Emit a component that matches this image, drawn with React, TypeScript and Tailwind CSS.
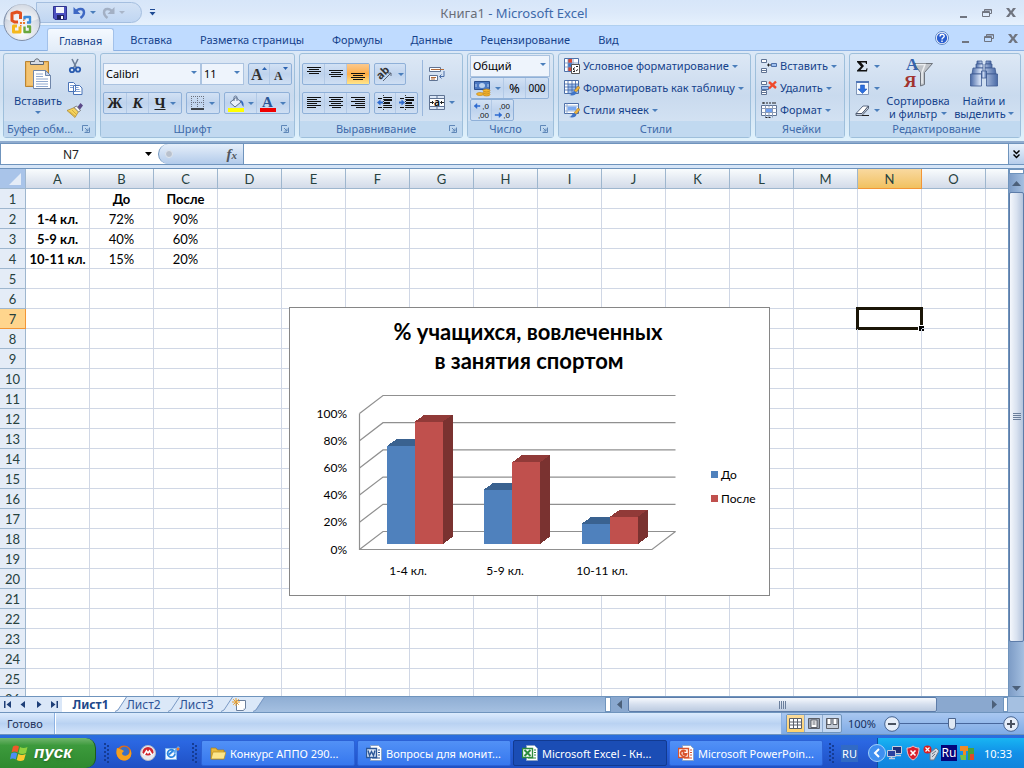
import type { ReactNode } from "react";
import clsx from "clsx";

const COLUMNS = "ABCDEFGHIJKLMNO".split("");
const ROW_COUNT = 26;

const cells: Record<string, string> = {
  B1: "До", C1: "После",
  A2: "1-4 кл.", B2: "72%", C2: "90%",
  A3: "5-9 кл.", B3: "40%", C3: "60%",
  A4: "10-11 кл.", B4: "15%", C4: "20%",
};

const chartData = [
  { label: "1-4 кл.", before: 72, after: 90 },
  { label: "5-9 кл.", before: 40, after: 60 },
  { label: "10-11 кл.", before: 15, after: 20 },
];

const tabs = ["Главная", "Вставка", "Разметка страницы", "Формулы", "Данные", "Рецензирование", "Вид"];

export default function App() {
  return (
    <div className="h-screen w-full flex flex-col overflow-hidden bg-[#bfdbff] text-[#15428b] font-['Noto_Sans','Open_Sans',sans-serif] text-[11px] leading-[13px]">
      <header className="relative shrink-0">
        <TitleBar />
        <TabBar />
        <button aria-label="Office" className="absolute left-0.5 top-0.5">
          <OfficeLogo />
        </button>
      </header>
      <Ribbon />
      <FormulaBar />
      <div className="flex flex-1 min-h-0 border-t border-[#6f94bd]">
        <Sheet />
        <VerticalScroll />
      </div>
      <SheetTabs />
      <StatusBar />
      <Taskbar />
    </div>
  );
}

/* ---------- title and tabs ---------- */

function TitleBar() {
  return (
    <div className="h-[26px] flex items-center bg-linear-to-b from-[#d7e6f9] via-[#dce9fa] to-[#e6f1fd] border-b border-[#b0d0f0]">
      <div className="w-[106px] ml-9 h-[21px] flex items-center gap-1.5 pl-4 rounded-r-full border border-[#a4bedf] bg-linear-to-b from-[#d3e2f5] to-[#c0d6f2]">
        <button aria-label="Сохранить"><SaveIcon /></button>
        <button aria-label="Отменить" className="flex items-center gap-1 text-[#3e68c4]"><UndoIcon /><Caret /></button>
        <button aria-label="Вернуть" className="flex items-center gap-1 text-[#a3b0c4]"><UndoIcon flip /><Caret muted /></button>
      </div>
      <button aria-label="Настройка панели" className="ml-1.5">
        <svg width="9" height="9" viewBox="0 0 9 9" fill="#1e4a94"><path d="M2 1h5v1H2zM1.500 4h6L4.500 7.500z" /></svg>
      </button>
      <h1 className="flex-1 pr-[88px] text-center text-[13px] leading-4 text-[#3e6aaa]">
        <span className="text-[#696e78]">Книга1</span> - Microsoft Excel
      </h1>
      <WindowButtons className="mr-2" />
    </div>
  );
}

function TabBar() {
  return (
    <nav className="h-[25px] flex items-end gap-1 pl-[47px] border-b border-[#8db2e3] bg-[#bfdbff]">
      {tabs.map((tab, i) => (
        <button
          key={tab}
          className={clsx(
            "h-[23px] whitespace-nowrap",
            i === 0
              ? "px-[11px] -mb-px rounded-t-[3px] border border-b-0 border-[#a2c1ea] bg-linear-to-b from-[#f4f9ff] to-[#e2ecf8]"
              : "px-3 pt-0.5"
          )}
        >
          {tab}
        </button>
      ))}
      <div className="ml-auto mr-1.5 h-full flex items-center gap-3">
        <button aria-label="Справка">
          <svg width="14" height="14" viewBox="0 0 14 14">
            <circle cx="7" cy="7" r="6.500" fill="#fff" stroke="#5b84c4" />
            <circle cx="7" cy="7" r="5.200" fill="#2b5fd0" />
            <path d="M5 5.500c0-3 4.200-2.800 4.200-.3C9.200 6.800 7 6.700 7 8.500M7 9.600v1.400" stroke="#fff" strokeWidth="1.400" fill="none" />
          </svg>
        </button>
        <WindowButtons />
      </div>
    </nav>
  );
}

function WindowButtons({ className }: { className?: string }) {
  return (
    <div className={clsx("flex items-center gap-3.5 text-[#707580]", className)}>
      <button aria-label="Свернуть">
        <svg width="9" height="10" viewBox="0 0 9 10"><path d="M1 8h7v2H1z" fill="currentColor" /></svg>
      </button>
      <button aria-label="Восстановить">
        <svg width="10" height="8" viewBox="0 0 10 8" fill="none" stroke="currentColor">
          <path d="M2.500 2V.5h7v4H7.500M.5 2.500h7v5h-7zM1 3.500h6.500M2.500 1h7" />
        </svg>
      </button>
      <button aria-label="Закрыть">
        <svg width="10" height="9" viewBox="0 0 10 9"><path d="M0 0h3l2 3 2-3h3L6.600 4.500 10 9H7L5 6 3 9H0l3.400-4.500z" fill="currentColor" /></svg>
      </button>
    </div>
  );
}

/* ---------- ribbon ---------- */

function Ribbon() {
  return (
    <div className="h-[92px] shrink-0 flex gap-1 px-[3px] pt-0.5 pb-[3px] overflow-hidden border-b-2 border-[#8fabce] bg-linear-to-b from-[#dbe8f7] via-[#cfdff1] to-[#e0f2fc]">
      <Group title="Буфер обм..." className="w-[93px]" launcher>
        <div className="flex h-full">
          <button className="w-[62px] flex flex-col items-center pt-1 pl-1.5">
            <PasteIcon />
            <span className="mt-1">Вставить</span>
            <span className="mt-1"><Caret /></span>
          </button>
          <div className="flex-1 flex flex-col items-center gap-1.5 pt-1 pr-3">
            <button aria-label="Вырезать"><CutIcon /></button>
            <button aria-label="Копировать"><CopyIcon /></button>
            <button aria-label="Формат по образцу"><BrushIcon /></button>
          </div>
        </div>
      </Group>

      <Group title="Шрифт" className="w-[195px]" launcher>
        <div className="flex flex-col gap-[7px] pl-0.5 pt-[9px]">
          <div className="flex gap-1">
            <div className="flex">
              <Select label="Шрифт" value="Calibri" className="w-[98px]" />
              <Select label="Размер" value="11" className="w-[43px]" />
            </div>
            <ButtonStrip>
              <StripButton label="Увеличить размер" className="w-[21px]">
                <svg className="overflow-visible" width="17" height="16" viewBox="0 0 17 16">
                  <text x="0" y="14" fontSize="16" className="font-['Liberation_Serif',serif] font-bold" fill="#333">A</text>
                  <path d="M11 4h5l-2.500-3z" fill="#2a62b0" />
                </svg>
              </StripButton>
              <StripButton label="Уменьшить размер" className="w-[21px]">
                <svg className="overflow-visible" width="17" height="16" viewBox="0 0 17 16">
                  <text x="2" y="14" fontSize="12" className="font-['Liberation_Serif',serif] font-bold" fill="#333">A</text>
                  <path d="M11 1h5l-2.500 3z" fill="#2a62b0" />
                </svg>
              </StripButton>
            </ButtonStrip>
          </div>
          <div className="flex gap-1 font-['Liberation_Serif',serif] font-bold text-[15px] text-[#222]">
            <ButtonStrip>
              <StripButton label="Полужирный" className="w-[23px]">Ж</StripButton>
              <StripButton label="Курсив" className="w-[22px] italic">К</StripButton>
              <StripButton label="Подчеркнутый" className="w-[32px]"><span className="underline">Ч</span><Caret /></StripButton>
            </ButtonStrip>
            <ButtonStrip>
              <StripButton label="Границы" className="w-[32px]"><BorderIcon /><Caret /></StripButton>
            </ButtonStrip>
            <ButtonStrip>
              <StripButton label="Цвет заливки" className="w-[32px]"><FillIcon /><Caret /></StripButton>
              <StripButton label="Цвет текста" className="w-[32px]">
                <svg className="overflow-visible" width="16" height="17" viewBox="0 0 16 17">
                  <text x="2" y="12" fontSize="15" className="font-['Liberation_Serif',serif] font-bold" fill="#2b5696">A</text>
                  <path d="M0 13h16v4H0z" fill="#f00000" />
                </svg>
                <Caret />
              </StripButton>
            </ButtonStrip>
          </div>
        </div>
      </Group>

      <Group title="Выравнивание" className="w-[164px]" launcher>
        <div className="flex">
          <div className="flex flex-col gap-[7px] pl-0.5 pt-[9px]">
            <div className="flex gap-1">
              <ButtonStrip>
                <StripButton label="По верхнему краю" className="w-[22px]"><LinesIcon rows={[14, 10, 14, 10]} top={1} /></StripButton>
                <StripButton label="По середине" className="w-[22px]"><LinesIcon rows={[14, 10, 14, 10]} top={4} /></StripButton>
                <StripButton label="По нижнему краю" className="w-[22px]" active><LinesIcon rows={[14, 10, 14, 10]} top={7} /></StripButton>
              </ButtonStrip>
              <ButtonStrip>
                <StripButton label="Ориентация" className="w-[30px]"><OrientationIcon /><Caret /></StripButton>
              </ButtonStrip>
            </div>
            <div className="flex gap-1">
              <ButtonStrip>
                <StripButton label="По левому краю" className="w-[22px]"><LinesIcon rows={[14, 10, 14, 10, 14, 9]} top={2} align="left" /></StripButton>
                <StripButton label="По центру" className="w-[22px]"><LinesIcon rows={[14, 10, 14, 10, 14, 9]} top={2} /></StripButton>
                <StripButton label="По правому краю" className="w-[22px]"><LinesIcon rows={[14, 10, 14, 10, 14, 9]} top={2} align="right" /></StripButton>
              </ButtonStrip>
              <ButtonStrip>
                <StripButton label="Уменьшить отступ" className="w-[21px]"><IndentIcon left /></StripButton>
                <StripButton label="Увеличить отступ" className="w-[21px]"><IndentIcon /></StripButton>
              </ButtonStrip>
            </div>
          </div>
          <div className="mt-1.5 ml-1 h-[56px] border-l border-[#9ab7dc]" />
          <div className="flex flex-col gap-[13px] pt-3 pl-1.5">
            <button aria-label="Перенос текста"><WrapIcon /></button>
            <button aria-label="Объединить" className="flex items-center gap-1"><MergeIcon /><Caret /></button>
          </div>
        </div>
      </Group>

      <Group title="Число" className="w-[87px]" launcher>
        <div className="flex flex-col items-start pl-0.5 pt-px">
          <Select label="Формат числа" value="Общий" className="w-20" />
          <ButtonStrip>
            <StripButton label="Денежный формат" className="w-[33px]"><CoinsIcon /><Caret /></StripButton>
            <StripButton label="Процентный формат" className="w-[22px] text-[13px] text-black">%</StripButton>
            <StripButton label="Формат с разделителями" className="w-[22px] text-[10px] text-black">000</StripButton>
          </ButtonStrip>
          <ButtonStrip>
            <StripButton label="Увеличить разрядность" className="w-[21px]"><DecimalIcon left /></StripButton>
            <StripButton label="Уменьшить разрядность" className="w-[21px]"><DecimalIcon /></StripButton>
          </ButtonStrip>
        </div>
      </Group>

      <Group title="Стили" className="w-[193px]">
        <div className="flex flex-col items-start gap-1.5 pl-[5px] pt-1">
          <IconRow icon={<GridIcon kind="cond" />} text="Условное форматирование" />
          <IconRow icon={<GridIcon kind="table" />} text="Форматировать как таблицу" />
          <IconRow icon={<GridIcon kind="cell" />} text="Стили ячеек" />
        </div>
      </Group>

      <Group title="Ячейки" className="w-[90px]">
        <div className="flex flex-col items-start gap-1.5 pl-[5px] pt-1">
          <IconRow icon={<CellsIcon kind="insert" />} text="Вставить" />
          <IconRow icon={<CellsIcon kind="delete" />} text="Удалить" />
          <IconRow icon={<CellsIcon kind="format" />} text="Формат" />
        </div>
      </Group>

      <Group title="Редактирование" className="flex-1 min-w-[171px]">
        <div className="flex h-full">
          <div className="flex flex-col items-start gap-1.5 pl-[5px] pt-1">
            <button aria-label="Сумма" className="flex items-center gap-1">
              <svg width="15" height="16" viewBox="0 0 15 16"><path d="M2 3h10v3h-1L10.500 4.500H6L9 8l-3.500 4H11l.6-1.800h.9L12 13.500H2v-1L6 8.500 2 4z" fill="#111" /></svg>
              <Caret />
            </button>
            <button aria-label="Заполнить" className="flex items-center gap-1">
              <svg width="15" height="16" viewBox="0 0 15 16">
                <path d="M1.500 1.500h12v13h-12z" fill="#f3f8ff" stroke="#8196b8" /><path d="M1 1h13v2H1z" fill="#5076b8" />
                <path d="M5.500 5h4v4H12l-4.500 4.500L3 9h2.500z" fill="#2b6ee0" stroke="#174aa8" strokeWidth=".5" />
              </svg>
              <Caret />
            </button>
            <button aria-label="Очистить" className="flex items-center gap-1">
              <svg width="15" height="16" viewBox="0 0 15 16">
                <path d="M1 11.500 8 4h5.500L7 11.500z" fill="#fff" stroke="#5c6b84" /><path d="M1 11.500v2h6l6.500-7V4L7 11.500z" fill="#c5cedd" stroke="#3b475c" strokeWidth=".8" />
                <path d="M7 13.500h7" stroke="#222" />
              </svg>
              <Caret />
            </button>
          </div>
          <button className="w-[70px] ml-[3px] flex flex-col items-center pt-1">
            <SortIcon />
            <span className="mt-1 whitespace-nowrap">Сортировка</span>
            <span className="flex items-center gap-1 whitespace-nowrap">и фильтр <Caret /></span>
          </button>
          <button className="w-[62px] flex flex-col items-center pt-1">
            <BinocularsIcon />
            <span className="mt-1 whitespace-nowrap">Найти и</span>
            <span className="flex items-center gap-0.5 whitespace-nowrap">выделить <Caret /></span>
          </button>
        </div>
      </Group>
    </div>
  );
}

function Group({ title, className, launcher, children }: { title: string; className?: string; launcher?: boolean; children: ReactNode }) {
  return (
    <section className={clsx("shrink-0 flex flex-col rounded-[3px] border border-[#9ebfdb] bg-linear-to-b from-[#dde8f5] via-[#c9daee] to-[#d8e6f5]", className)}>
      <div className="flex-1 min-h-0">{children}</div>
      <div className="h-4 shrink-0 flex items-center bg-[#c1d9f0] text-[#3e6aaa] pl-[3px]">
        <h2 className={clsx("flex-1 leading-4 whitespace-nowrap", title.endsWith("...") ? "text-left" : "text-center")}>{title}</h2>
        {launcher && (
          <button aria-label={title + ": параметры"} className="mr-[5px]">
            <svg width="8" height="8" viewBox="0 0 8 8" fill="none" stroke="#5f87b8">
              <path d="M.5 6V.5H6M2.500 7.500h5v-5M3 3l3 3M3.500 6h2.500V3.500" />
            </svg>
          </button>
        )}
      </div>
    </section>
  );
}

function Select({ label, value, className }: { label: string; value: string; className: string }) {
  return (
    <div className={clsx("relative h-[22px]", className)}>
      <select aria-label={label} defaultValue={value} className="w-full h-full appearance-none border border-[#abc3e0] bg-[#eef4fc] pl-0.5 leading-4 text-black">
        <option>{value}</option>
      </select>
      <span className="pointer-events-none absolute right-1 top-2"><Caret /></span>
    </div>
  );
}

function ButtonStrip({ children }: { children: ReactNode }) {
  return (
    <div className="h-[22px] flex rounded-[2px] border border-[#8fb0d8] bg-linear-to-b from-[#d2e1f4] via-[#bfd3ed] to-[#cfdff3] divide-x divide-[#b2c9e6]">
      {children}
    </div>
  );
}

function StripButton({ label, className, active, children }: { label: string; className?: string; active?: boolean; children: ReactNode }) {
  return (
    <button
      aria-label={label}
      className={clsx("flex items-center justify-center gap-1", className, active && "bg-linear-to-b from-[#fbc98d] via-[#ffad43] to-[#ffe68a]")}
    >
      {children}
    </button>
  );
}

function IconRow({ icon, text }: { icon: ReactNode; text: string }) {
  return (
    <button className="h-4 flex items-center gap-[3px] whitespace-nowrap">
      {icon}
      <span className="leading-4">{text}</span>
      <Caret />
    </button>
  );
}

function Caret({ muted }: { muted?: boolean }) {
  return (
    <svg className="shrink-0" width="6" height="3" viewBox="0 0 6 3"><path d="M0 0h6L3 3z" fill={muted ? "#a9b6c9" : "#4a7ebb"} /></svg>
  );
}

/* ---------- formula bar ---------- */

function FormulaBar() {
  return (
    <div className="shrink-0 pb-[3px] bg-[#d6e5f7]">
      <div className="h-[22px] flex border-y border-[#6f94bd] bg-white">
        <div className="w-[158px] flex items-center border-l border-[#6f94bd]">
          <input aria-label="Имя" defaultValue="N7" className="flex-1 min-w-0 pr-1 text-center text-[12px] text-[#222] outline-none" />
          <button aria-label="Список имен" className="mr-1.5">
            <svg width="7" height="4" viewBox="0 0 7 4"><path d="M0 0h7L3.500 4z" fill="#000" /></svg>
          </button>
        </div>
        <div className="w-[86px] flex items-center justify-between rounded-l-full border border-y-0 border-[#6f94bd] bg-linear-to-b from-[#e6effa] to-[#b3cbea] pl-1.5 pr-1.5">
          <span className="size-2 rounded-full bg-[#b9c1cd] border border-[#dfe6ef]" />
          <button aria-label="Вставить функцию" className="font-['Liberation_Serif',serif] italic font-bold text-[15px] leading-4 text-[#51565e]">
            f<span className="text-[11px]">x</span>
          </button>
        </div>
        <input aria-label="Строка формул" className="flex-1 min-w-0 px-1 outline-none" />
        <button aria-label="Развернуть" className="w-4 flex items-center justify-center border-l border-[#6f94bd] bg-linear-to-b from-[#e9f2fc] to-[#b6cdeb]">
          <svg width="7" height="9" viewBox="0 0 7 9" fill="none" stroke="#000" strokeWidth="1.500"><path d="m.5.500 3 3 3-3M.5 4.500l3 3 3-3" /></svg>
        </button>
      </div>
    </div>
  );
}

/* ---------- sheet ---------- */

function Sheet() {
  return (
    <main className="relative flex-1 min-w-0 overflow-hidden bg-white font-['Lato','Open_Sans',sans-serif]">
      <table className="w-full min-w-[1008px] table-fixed border-separate border-spacing-0 text-[13px] leading-[18px] text-black">
        <thead>
          <tr className="h-5 text-[#27413e]">
            <th aria-label="Выделить все" className="w-[26px] p-0 border-r border-b border-[#9eb6ce] bg-[#a9c4e9]">
              <svg className="ml-auto mr-1" width="12" height="12" viewBox="0 0 12 12"><path d="M12 0v12H0z" fill="#e4ecf7" /></svg>
            </th>
            {COLUMNS.map((c) => (
              <th
                key={c}
                scope="col"
                className={clsx(
                  "w-16 p-0 border-r border-b font-normal",
                  c === "N" ? "border-[#f29536] bg-linear-to-b from-[#f9d99f] to-[#f1c15f]" : "border-[#9eb6ce] bg-linear-to-b from-[#f9fcfd] to-[#d3dbe9]"
                )}
              >
                {c}
              </th>
            ))}
            <td className="p-0 border-b border-[#9eb6ce] bg-linear-to-b from-[#f9fcfd] to-[#d3dbe9]" />
          </tr>
        </thead>
        <tbody>
          {Array.from({ length: ROW_COUNT }, (_, i) => i + 1).map((row) => (
            <tr key={row} className="h-5">
              <th
                scope="row"
                className={clsx("p-0 border-r border-b font-normal text-[#27413e]", row === 7 ? "border-[#f29536] bg-[#ffd58d]" : "border-[#9eb6ce] bg-[#e4ecf7]")}
              >
                {row}
              </th>
              {COLUMNS.map((c) => (
                <td
                  key={c}
                  className={clsx("relative p-0 border-r border-b border-[#d0d7e5] text-center whitespace-nowrap", (row === 1 || c === "A") && "font-bold")}
                >
                  {cells[c + row]}
                  {c + row === "N7" && (
                    <div className="absolute -inset-0.5 border-[3px] border-[#1b1607]">
                      <div className="absolute -right-1 -bottom-1 size-[6px] border-t border-l border-white bg-black" />
                    </div>
                  )}
                </td>
              ))}
              <td className="p-0 border-b border-[#d0d7e5]" />
            </tr>
          ))}
        </tbody>
      </table>
      <Chart />
    </main>
  );
}

function Chart() {
  const floor = 237;
  const levels = [0, 20, 40, 60, 80, 100];
  return (
    <figure className="absolute left-[289px] top-[138px]">
      <svg width="481" height="289" viewBox="0 0 481 289" fill="#000" className="block bg-white">
        <rect x=".5" y=".5" width="480" height="288" fill="none" stroke="#868686" />
        <g fontSize="22" fontWeight="bold" textAnchor="middle">
          <text x="239" y="33">% учащихся, вовлеченных</text>
          <text x="240" y="62">в занятия спортом</text>
        </g>
        {levels.map((v) => {
          const y = 242.5 - v * 1.36;
          return (
            <g key={v}>
              <path d={`M70.500 ${y}L94 ${y - 18}H386.500`} fill="none" stroke="#909090" strokeWidth="1.200" />
              <text x="58" y={y + 4} fontSize="12" textAnchor="end">{v}%</text>
            </g>
          );
        })}
        <path d="M70.500 106.500v136H363l23.500-18" fill="none" stroke="#909090" strokeWidth="1.200" />
        {chartData.map((d, i) => {
          const x = 98 + Math.floor(i * 97.5);
          const b = floor - d.before * 1.36;
          const a = floor - d.after * 1.36;
          return (
            <g key={d.label}>
              <g shapeRendering="crispEdges">
                <path d={`M${x} ${b}l9.500-7h28v7z`} fill="#3a6290" />
                <path d={`M${x} ${b}h28V${floor}h-28z`} fill="#4f81bd" />
                <path d={`M${x + 28} ${a}l9.500-7h28l-9.500 7z`} fill="#913a38" />
                <path d={`M${x + 56} ${a}l9.500-7V${floor - 7}l-9.500 7z`} fill="#7a3230" />
                <path d={`M${x + 28} ${a}h28V${floor}h-28z`} fill="#c0504d" />
              </g>
              <text x={119 + i * 97} y="268" fontSize="12" textAnchor="middle">{d.label}</text>
            </g>
          );
        })}
        <path d="M422 164h7v7h-7z" fill="#4f81bd" />
        <path d="M422 188h7v7h-7z" fill="#c0504d" />
        <text x="432" y="172" fontSize="12">До</text>
        <text x="432" y="196" fontSize="12">После</text>
      </svg>
    </figure>
  );
}

function VerticalScroll() {
  return (
    <div className="w-4 shrink-0 flex flex-col items-center bg-linear-to-r from-[#7d9cc6] to-[#a4bfe0] border-l border-[#6f94bd]">
      <div className="h-[5px] w-full bg-white border border-[#6f94bd]" />
      <button aria-label="Вверх" className="h-[18px]">
        <svg width="9" height="5" viewBox="0 0 9 5"><path d="M0 5h9L4.500 0z" fill="#4c607a" /></svg>
      </button>
      <div className="flex-[450] w-full flex items-center justify-center rounded-[2px] border border-[#5d7ca9] bg-linear-to-r from-[#f4f7fc] via-[#d9e2f0] to-[#b4c4dc]">
        <svg width="8" height="8" viewBox="0 0 8 8" stroke="#6b7f9c"><path d="M0 .5h8M0 2.500h8M0 4.500h8M0 6.500h8" /></svg>
      </div>
      <div className="flex-[38]" />
      <button aria-label="Вниз" className="h-4">
        <svg width="9" height="5" viewBox="0 0 9 5"><path d="M0 0h9L4.500 5z" fill="#4c607a" /></svg>
      </button>
    </div>
  );
}

function SheetTabs() {
  return (
    <div className="h-[17px] shrink-0 flex border-t border-b border-[#6f94bd] bg-linear-to-b from-[#8faed4] to-[#a5c0e1]">
      <div className="w-[62px] flex items-center justify-around bg-[#dae7f8] text-[#1e3f78]">
        <button aria-label="Первый лист"><svg width="8" height="7" viewBox="0 0 8 7" fill="currentColor"><path d="M0 0h1.500v7H0zM7 0v7L2.500 3.500z" /></svg></button>
        <button aria-label="Предыдущий лист"><svg width="8" height="7" viewBox="0 0 8 7" fill="currentColor"><path d="M6 0v7L1.500 3.500z" /></svg></button>
        <button aria-label="Следующий лист"><svg width="8" height="7" viewBox="0 0 8 7" fill="currentColor"><path d="M2 0v7l4.500-3.500z" /></svg></button>
        <button aria-label="Последний лист"><svg width="8" height="7" viewBox="0 0 8 7" fill="currentColor"><path d="M6.500 0H8v7H6.500zM1 0v7l4.500-3.500z" /></svg></button>
      </div>
      <div className="flex-1 flex min-w-0 text-[12px] leading-[15px] text-[#2f5496]">
        <SheetTab active className="w-[53px] bg-white font-bold text-[#20478a]">Лист1</SheetTab>
        <SheetTab className="w-[53px] bg-[#dbe8f8]">Лист2</SheetTab>
        <SheetTab className="w-[53px] bg-[#dbe8f8]">Лист3</SheetTab>
        <SheetTab className="w-8 bg-[#dbe8f8]">
          <svg width="14" height="13" viewBox="0 0 14 13">
            <path d="M4.500 2.500h9v8l-2 2h-7z" fill="#fff" stroke="#6b7f9c" /><path d="M11.500 12.500v-2h2z" fill="#9fb0c8" />
            <path d="M4 0v8M0 4h8M1.200 1.200l5.600 5.600M6.800 1.200 1.200 6.800" stroke="#e8a030" />
          </svg>
        </SheetTab>
      </div>
      <div className="w-[419px] flex">
        <div className="w-1.5 bg-white border border-[#6f94bd]" />
        <button aria-label="Влево" className="w-[17px] flex items-center justify-center bg-[#8aa8cf]">
          <svg width="5" height="9" viewBox="0 0 5 9"><path d="M5 0v9L0 4.500z" fill="#4c607a" /></svg>
        </button>
        <div className="flex-[308] flex items-center justify-center rounded-[2px] border border-[#5d7ca9] bg-linear-to-b from-[#f6f9fd] via-[#d5dfee] to-[#bccbe0]">
          <svg width="8" height="8" viewBox="0 0 8 8" stroke="#6b7f9c"><path d="M.5 0v8M2.500 0v8M4.500 0v8M6.500 0v8" /></svg>
        </div>
        <div className="flex-[48] bg-[#8aa8cf]" />
        <button aria-label="Вправо" className="w-[18px] flex items-center justify-center bg-[#8aa8cf]">
          <svg width="5" height="9" viewBox="0 0 5 9"><path d="M0 0v9l5-4.500z" fill="#4c607a" /></svg>
        </button>
        <div className="w-[5px] bg-white border border-[#6f94bd]" />
        <div className="w-4 bg-[#a5c0e1]" />
      </div>
    </div>
  );
}

function SheetTab({ className, active, children }: { className: string; active?: boolean; children: ReactNode }) {
  return (
    <button className={clsx("relative h-full pl-1 flex items-center justify-center", className)}>
      {children}
      <svg className="absolute -right-3 top-0 z-10" width="12" height="15" viewBox="0 0 12 15">
        <path d="M0 0h11L2 13.500 0 15z" fill={active ? "#fff" : "#dbe8f8"} />
        <path d="M11.500 0 3 13l-3 1.500" fill="none" stroke="#7a99c4" />
      </svg>
    </button>
  );
}

/* ---------- status bar ---------- */

function StatusBar() {
  return (
    <footer className="h-[22px] shrink-0 flex items-center border-b border-[#6f94bd] bg-linear-to-b from-[#dcebfd] via-[#b9d2f2] to-[#d3e4fa]">
      <span className="w-[54px] pl-[7px] text-[#23335c]">Готово</span>
      <div className="h-full w-0.5 border-l border-[#8db2e3] bg-white" />
      <div className="ml-auto h-full w-[243px] flex items-center border-l border-[#8db2e3] bg-linear-to-b from-[#a9c7f0] to-[#7fabe6]">
        <div className="ml-1 flex h-[19px] rounded-[2px] border border-[#6f94bd] divide-x divide-[#8fabce] bg-[#c4d8f2]">
          <button aria-label="Обычный" className="w-[18px] flex items-center justify-center bg-linear-to-b from-[#fbdb9a] to-[#ffd36b]">
            <svg width="13" height="11" viewBox="0 0 13 11" fill="#fff" stroke="#5b5f68"><path d="M.5.500h12v10H.5zM4.500.500v10M8.500.500v10M.5 4h12M.5 7h12" /></svg>
          </button>
          <button aria-label="Разметка страницы" className="w-[18px] flex items-center justify-center">
            <svg width="12" height="11" viewBox="0 0 12 11" fill="none" stroke="#5b5f68"><path d="M.5.500h11v10H.5z" fill="#9aa3b0" /><path d="M3 2h6v7.500H3z" fill="#fff" /><path d="M4.500 4h3M4.500 6h3" /></svg>
          </button>
          <button aria-label="Страничный" className="w-[18px] flex items-center justify-center">
            <svg width="13" height="11" viewBox="0 0 13 11" stroke="#5b5f68"><path d="M.5.500h12v10H.5z" fill="#c5ccd6" /><path d="M1 .5h4v6H1zM7 .5h4v6H7z" fill="#fff" /></svg>
          </button>
        </div>
        <button className="ml-1 w-8 text-[#15305f]">100%</button>
        <button aria-label="Уменьшить" className="ml-1.5"><ZoomKnob minus /></button>
        <input
          type="range"
          aria-label="Масштаб"
          defaultValue="50"
          className="flex-1 min-w-0 h-3 appearance-none bg-transparent bg-[linear-gradient(#48679c,#48679c)] bg-[length:100%_1px] bg-center bg-no-repeat [&::-webkit-slider-thumb]:appearance-none [&::-webkit-slider-thumb]:w-2 [&::-webkit-slider-thumb]:h-3 [&::-webkit-slider-thumb]:rounded-b-full [&::-webkit-slider-thumb]:border [&::-webkit-slider-thumb]:border-[#4a648e] [&::-webkit-slider-thumb]:bg-[#dfe8f4]"
        />
        <button aria-label="Увеличить" className="mr-[5px]"><ZoomKnob /></button>
      </div>
    </footer>
  );
}

function ZoomKnob({ minus }: { minus?: boolean }) {
  return (
    <svg width="16" height="16" viewBox="0 0 16 16">
      <circle cx="8" cy="8" r="7.300" fill="#e6eefa" stroke="#45628f" />
      <path d={minus ? "M4 7h8v2H4z" : "M4 7h3V4h2v3h3v2H9v3H7V9H4z"} fill="#4a5261" />
    </svg>
  );
}

/* ---------- taskbar ---------- */

const tasks = [
  { title: "Конкурс АППО 290...", icon: <FolderIcon />, active: false },
  { title: "Вопросы для монит...", icon: <DocIcon kind="word" />, active: false },
  { title: "Microsoft Excel - Кн...", icon: <DocIcon kind="excel" />, active: true },
  { title: "Microsoft PowerPoin...", icon: <DocIcon kind="ppt" />, active: false },
];

function Taskbar() {
  return (
    <div className="h-[33px] shrink-0 flex items-stretch pt-[3px] bg-linear-to-b from-[#2a6fdc] via-[#2b67e2] via-20% to-[#1f50c4] text-white">
      <button className="w-24 flex items-center gap-1.5 pl-2.5 rounded-r-[10px] border-r border-[#1d5a1d] bg-linear-to-b from-[#6fb56c] via-[#3c9a3c] via-25% to-[#2f8a2f]">
        <WindowsLogo />
        <span className="font-['Liberation_Sans',sans-serif] text-[17px] leading-5 font-bold italic text-shadow-md">пуск</span>
      </button>
      <Grip className="ml-2" />
      <div className="flex items-center gap-2 ml-1.5">
        <button aria-label="Firefox"><FirefoxIcon /></button>
        <button aria-label="Браузер"><RedBallIcon /></button>
        <button aria-label="Почта"><MailIcon /></button>
      </div>
      <Grip className="ml-3" />
      <div className="flex-1 min-w-0 flex gap-0.5 py-0.5 ml-[3px]">
        {tasks.map((t) => (
          <button
            key={t.title}
            className={clsx(
              "w-[154px] min-w-0 flex items-center gap-1 pl-2 rounded-[2px] border whitespace-nowrap overflow-hidden",
              t.active ? "border-[#123a90] bg-[#1b4db5]" : "border-[#2c62d6] bg-linear-to-b from-[#5291f6] to-[#3677ee]"
            )}
          >
            {t.icon}
            {t.title}
          </button>
        ))}
      </div>
      <Grip className="mx-1.5" />
      <div className="flex items-center">
        <span className="bg-[#316ac5] px-px py-0.5">RU</span>
      </div>
      <div className="relative ml-[19px] w-[147px] flex items-center gap-0.5 pl-[9px] border-l border-[#0d4f9f] bg-linear-to-b from-[#19b5f2] via-[#1290e8] to-[#1184dc]">
        <button aria-label="Скрыть значки" className="absolute -left-2.5 top-1.5">
          <svg width="18" height="18" viewBox="0 0 18 18"><circle cx="9" cy="9" r="8.500" fill="#3f8ff0" stroke="#a4d2fa" /><path d="m11 5-4 4 4 4" fill="none" stroke="#fff" strokeWidth="2" /></svg>
        </button>
        <NetworkIcon />
        <svg width="16" height="16" viewBox="0 0 16 16"><path d="M8 1c2 1.500 4 2 6 2 0 6-2 10-6 12C4 13 2 9 2 3c2 0 4-.5 6-2z" fill="#d81e2c" stroke="#f2c3c6" /><path d="m5.500 5.500 5 5m0-5-5 5" stroke="#fff" strokeWidth="1.600" /></svg>
        <svg width="16" height="16" viewBox="0 0 16 16"><path d="m7 8 6-5 3 3-5 9H7z" fill="#d3d9e2" stroke="#6b7788" /><path d="m9 9 4-3M9 12l3-3" stroke="#6b7788" /><circle cx="4.500" cy="4.500" r="4" fill="#e01b1b" /><path d="m2.500 2.500 4 4m0-4-4 4" stroke="#fff" strokeWidth="1.200" /></svg>
        <span className="size-4 bg-[#04047c] text-center text-[12px] leading-4">Ru</span>
        <svg width="16" height="16" viewBox="0 0 16 16"><path d="M1 1h8v5H7v4H4V6H1z" fill="#f08a24" /><path d="M9 3h6v6h-4v6H9z" fill="#48a23c" /><path d="M1 10h6v5H2z" fill="#7ac143" /><path d="M11 9h4v6h-4z" fill="#e04a2a" /></svg>
        <time className="ml-auto mr-3">10:33</time>
      </div>
    </div>
  );
}

function Grip({ className }: { className?: string }) {
  return (
    <svg className={clsx("shrink-0 self-center", className)} width="6" height="20" viewBox="0 0 6 20" fill="#153c94">
      <path d="M0 0h2v2H0zM3 2h2v2H3zM0 4h2v2H0zM3 6h2v2H3zM0 8h2v2H0zM3 10h2v2H3zM0 12h2v2H0zM3 14h2v2H3zM0 16h2v2H0zM3 18h2v2H3z" />
    </svg>
  );
}

/* ---------- icons ---------- */

function OfficeLogo() {
  return (
    <svg width="40" height="40" viewBox="0 0 40 40">
      <defs>
        <radialGradient id="orb" cx=".5" cy=".75" r=".7">
          <stop offset="0" stopColor="#fff" />
          <stop offset=".7" stopColor="#d5dbe5" />
          <stop offset="1" stopColor="#a8b4c8" />
        </radialGradient>
      </defs>
      <circle cx="20" cy="20.500" r="18" fill="url(#orb)" stroke="#7f8fa9" />
      <path d="M4 17a16 15 0 0 1 32 0c-8 4-24 4-32 0z" fill="#fff" opacity=".55" />
      <g fill="none" strokeWidth="3" strokeLinejoin="round">
        <path d="M18.500 17v-6l-3.500-1-5 1.500v7l2.500 1.500H16" stroke="#e2511f" />
        <path d="M22.500 17.500V15H28v5.500h-3" stroke="#3a8ad8" strokeWidth="2.400" />
        <path d="M18 24.500V30h-6.500v-6H15" stroke="#f5b81c" />
        <path d="M22.500 24.500V30H28v-5.500h-3" stroke="#6aa83c" strokeWidth="2.400" />
      </g>
      <path d="M18 20h2v2h-2zM21 20h2v2h-2zM21 17.500h1.500V19H21zM18 23h1.500v1.500H18z" fill="#e87b2c" />
    </svg>
  );
}

function SaveIcon() {
  return (
    <svg width="14" height="14" viewBox="0 0 14 14">
      <path d="M.5.500h13v13H2L.5 12z" fill="#4b50c0" stroke="#2f338e" />
      <path d="M3 1h8v6H3z" fill="#f2f5fb" />
      <path d="M4 9h7v4.500H4z" fill="#1f2360" />
      <path d="M8 10h2v3H8z" fill="#fff" />
    </svg>
  );
}

function UndoIcon({ flip }: { flip?: boolean }) {
  return (
    <svg className={clsx(flip && "-scale-x-100")} width="13" height="13" viewBox="0 0 13 13" fill="none" stroke="currentColor">
      <path d="M2.500 6C5 2 11 2 11 6.500c0 2.500-1.500 4-3.500 5.500" strokeWidth="2.400" />
      <path d="M.5 1v7h7z" fill="currentColor" stroke="none" />
    </svg>
  );
}

function PasteIcon() {
  return (
    <svg className="shrink-0" width="28" height="32" viewBox="0 0 28 32">
      <path d="M1.500 3.500h23v25h-23z" fill="#edb65d" stroke="#b98432" />
      <path d="M3 5h20v22H3z" fill="#f5cb80" opacity=".6" />
      <path d="M6.500 6.500v-3h4c0-3.500 5-3.500 5 0h4v3z" fill="#d6dbe3" stroke="#5d6570" />
      <path d="M9.500 12.500h12l5 5v13h-17z" fill="#fff" stroke="#6f86aa" />
      <path d="M21.500 12.500v5h5z" fill="#c8d6ec" stroke="#6f86aa" />
      <path d="M12 16h7M12 18.500h7M12 21h12M12 23.500h12M12 26h12M12 28.500h12" stroke="#8fa8cf" />
    </svg>
  );
}

function CutIcon() {
  return (
    <svg width="16" height="16" viewBox="0 0 16 16" fill="none">
      <path d="M5 1l4.500 9M11 1 6.500 10" stroke="#6d7f99" strokeWidth="1.600" />
      <circle cx="5" cy="12" r="2.200" stroke="#2a5cb0" strokeWidth="1.800" />
      <circle cx="11" cy="11.500" r="2.200" stroke="#2a5cb0" strokeWidth="1.800" />
    </svg>
  );
}

function CopyIcon() {
  return (
    <svg width="16" height="16" viewBox="0 0 16 16" fill="#fff" stroke="#4a74b8">
      <path d="M1.500 2.500h5l2 2v7h-7zM6.500 5.500h6l2.500 2.500v6.500H6.500z" />
      <path d="M3 5.500h3M3 7.500h3M8.500 9.500h4M8.500 11.500h5M8.500 7.500h3" stroke="#7fa0d4" />
    </svg>
  );
}

function BrushIcon() {
  return (
    <svg width="16" height="16" viewBox="0 0 16 16">
      <path d="M0 8.500 7.500 5.500l4 4L8 15.500z" fill="#f5d35c" stroke="#a5802a" strokeWidth=".7" />
      <path d="M2.500 9.500 8.500 14.500M5 8 9.500 12.500" stroke="#c19a36" strokeWidth=".7" />
      <path d="m7 5.500 2.500-1.500 4 4.500L11.500 10z" fill="#f4f4f4" stroke="#555" strokeWidth=".7" />
      <path d="m10.500 5 3-4L16 3.500l-3 4z" fill="#5b4a88" />
    </svg>
  );
}

function BorderIcon() {
  return (
    <svg width="14" height="14" viewBox="0 0 14 14" fill="none" stroke="#69707e">
      <path d="M.5 0v12M6.500 0v12M12.500 0v12M0 .5h13M0 6.500h13" strokeDasharray="1 1" />
      <path d="M0 13h13" stroke="#111" strokeWidth="1.500" />
    </svg>
  );
}

function FillIcon() {
  return (
    <svg width="16" height="17" viewBox="0 0 16 17">
      <path d="m2 7.500 6-5 5 4.500-6 5z" fill="#e9f0fa" stroke="#5c6f8c" />
      <path d="M6 6V2.500C6 .5 9 .5 9 2.500V6" fill="none" stroke="#5c6f8c" />
      <path d="M12 5c3 .5 4 3 3.500 7-1.500-1.500-2-3.500-2.500-5z" fill="#3569bd" />
      <path d="M0 13h16v4H0z" fill="#ff0" />
    </svg>
  );
}

function LinesIcon({ rows, top, align = "center" }: { rows: number[]; top: number; align?: "left" | "center" | "right" }) {
  const shift = { left: 0, center: 0.5, right: 1 }[align];
  return (
    <svg width="14" height="16" viewBox="0 0 14 16" fill="#111">
      {rows.map((w, i) => (
        <rect key={i} x={(14 - w) * shift} y={top + i * 2} width={w} height="1" shapeRendering="crispEdges" />
      ))}
    </svg>
  );
}

function OrientationIcon() {
  return (
    <svg className="overflow-visible" width="17" height="16" viewBox="0 0 17 16">
      <text x="1" y="12" fontSize="11" fontWeight="bold" transform="rotate(-45 5 10)" fill="#333">ab</text>
      <path d="M6 15 14 7M14 7h-3M14 7v3" stroke="#5a6577" fill="none" />
    </svg>
  );
}

function IndentIcon({ left }: { left?: boolean }) {
  return (
    <svg width="16" height="16" viewBox="0 0 16 16">
      <path d="M7 2h8v1H7zM7 4h8v2H7zM7 7h6v2H7zM7 10h8v1H7zM1 12h4v1H1zM7 12h8v1H7zM1 3h4v1H1z" fill="#111" />
      <path d="M6.500 0v16" stroke="#333" strokeDasharray="1 1" />
      <path d={left ? "M0 7.500 3.500 4.500V6.500H6v2H3.500v2z" : "M6 7.500 2.500 4.500V6.500H0v2h2.500v2z"} fill="#2e6bd0" />
    </svg>
  );
}

function WrapIcon() {
  return (
    <svg width="16" height="16" viewBox="0 0 16 16">
      <path d="M.5 1.500h11v4H.5zM.5 9.500h8v5h-8z" fill="#fff" stroke="#5f7393" />
      <path d="M2 3.500h13" stroke="#b06a3a" />
      <path d="M2 11.500h5M2 13h4" stroke="#b06a3a" />
      <path d="M15 5v5.500h-4M12.500 8.500l-2 2 2 2" fill="none" stroke="#4b6ea8" />
    </svg>
  );
}

function MergeIcon() {
  return (
    <svg className="overflow-visible" width="16" height="15" viewBox="0 0 16 15">
      <path d="M.5.500h15v14H.5z" fill="#dce8f8" stroke="#5f7393" />
      <path d="M.5 3.500h15M.5 11.500h15M8 .5v3M8 11.500v3" stroke="#5f7393" />
      <path d="M1 4h14v7H1z" fill="#fff" />
      <path d="M1 7.500h3.500M3 6l1.500 1.500L3 9M15 7.500h-3.500M13 6l-1.500 1.500L13 9" fill="none" stroke="#222" />
      <text x="8" y="10.500" fontSize="10" fontWeight="bold" textAnchor="middle" fill="#111">a</text>
    </svg>
  );
}

function CoinsIcon() {
  return (
    <svg width="17" height="17" viewBox="0 0 17 17">
      <path d="M.5 1.500h15v8H.5z" fill="#4a78c2" stroke="#2b4f8f" />
      <ellipse cx="8" cy="5.500" rx="3" ry="2.500" fill="#b9d0f0" />
      <path d="M2 4v3M14 4v3" stroke="#b9d0f0" />
      <g fill="#f5b731" stroke="#b57a12" strokeWidth=".6">
        <ellipse cx="12.500" cy="14.500" rx="3.500" ry="1.500" /><ellipse cx="12.500" cy="12.500" rx="3.500" ry="1.500" />
        <ellipse cx="12.500" cy="10.500" rx="3.500" ry="1.500" /><ellipse cx="6" cy="14" rx="3.500" ry="1.500" />
      </g>
    </svg>
  );
}

function DecimalIcon({ left }: { left?: boolean }) {
  return (
    <svg className="overflow-visible font-['Liberation_Sans',sans-serif]" width="17" height="17" viewBox="0 0 17 17" fontSize="8" fill="#111">
      <text x="16" y="7" textAnchor="end">{left ? ",0" : ",00"}</text>
      <text x="16" y="16" textAnchor="end">{left ? ",00" : ",0"}</text>
      <path d={left ? "M1 4l3-2.500v2h3v1H4v2z" : "M8 13l-3-2.500v2H1v1h4v2z"} fill="#2e6bd0" stroke="#2e6bd0" strokeWidth=".5" />
    </svg>
  );
}

function GridIcon({ kind }: { kind: "cond" | "table" | "cell" }) {
  return (
    <svg width="16" height="16" viewBox="0 0 16 16">
      <path d={kind === "cell" ? "M.5 1.500h14v10H.5z" : "M.5.500h14v13H.5z"} fill="#fff" stroke="#4d6fa8" />
      {kind === "cond" && (
        <>
          <path d="M4 1h4v4H4z" fill="#d94a38" /><path d="M4 5h4v4H4z" fill="#3f76c8" /><path d="M4 9h3v4H4z" fill="#d94a38" />
          <path d="M.5 5h14M.5 9h14M4 .5v13M9 .5v13" stroke="#7390bf" strokeWidth=".8" />
          <path d="M7.500 6.500h8v9h-8z" fill="#fff" stroke="#555" />
          <path d="M9 11l2-1.500M9 11l2 1.500M12 13l2-1.500M9 13.500h2M12 8.500h2" stroke="#222" fill="none" />
        </>
      )}
      {kind === "table" && (
        <>
          <path d="M4 4h10v9H4z" fill="#9fc0ee" />
          <path d="M.5 4h14M.5 7h14M.5 10h14M4 .5v13M8 .5v13M11.500.500v13" stroke="#3d62a4" strokeWidth=".8" />
        </>
      )}
      {kind === "cell" && (
        <>
          <path d="M.5 4h14M.5 9h14M3 1.500v10" stroke="#8aa4cd" strokeWidth=".8" />
          <path d="M3.500 4.500h9v4h-9z" fill="#7daaf0" />
        </>
      )}
      {kind !== "cond" && (
        <>
          <path d="m10 11 4-5 2 1.500-4 5z" fill="#f0b43c" stroke="#8f6a1f" strokeWidth=".5" />
          <path d="M5 15c3 0 3-4 5.500-4l2 1.500C12 15 9 16 5 15z" fill="#3e74c8" />
        </>
      )}
    </svg>
  );
}

function CellsIcon({ kind }: { kind: "insert" | "delete" | "format" }) {
  if (kind === "format") {
    return (
      <svg width="16" height="16" viewBox="0 0 16 16">
        <path d="M.5 3.500h15v10H.5z" fill="#fff" stroke="#5f7393" />
        <path d="M.5 6.500h15M.5 10.500h15M4.500 3.500v12M11.500 3.500v12M8 3.500v2M8 11v4" stroke="#8a9bb7" />
        <path d="M5 7h6v3H5z" fill="#6f9ff0" />
        <path d="M2 1h12M2 0v2.500M14 0v2.500M4.500 15.500h5" stroke="#222" strokeDasharray="2 1" />
      </svg>
    );
  }
  return (
    <svg width="16" height="16" viewBox="0 0 16 16">
      <path d="M.5 1.500h5v3h-5zM.5 10.500h5v4h-5zM.5 12.500h5" fill="#fff" stroke="#5f7393" />
      {kind === "insert" ? (
        <>
          <path d="M10.500 5.500h5v3h-5z" fill="#9fc0ee" stroke="#4d6fa8" />
          <path d="M6 7h4M7.500 5.500v3" stroke="#222" />
        </>
      ) : (
        <>
          <path d="M.5 6.500h7v3h-7z" fill="#9fc0ee" stroke="#4d6fa8" />
          <path d="m8 2 7 6M15 1.500 8 8.500" stroke="#ef4a2c" strokeWidth="2.400" />
        </>
      )}
    </svg>
  );
}

function SortIcon() {
  return (
    <svg className="shrink-0 overflow-visible" width="32" height="32" viewBox="0 0 32 32">
      <path d="M11.500 5.500h19l-8 9v12l-4 1.500V14.500z" fill="#bfc3c8" stroke="#6f757d" />
      <path d="M14 6.500h9l-3 8v11" fill="none" stroke="#eceef0" strokeWidth="1.500" />
      <g className="font-['Liberation_Serif',serif]" fontSize="17" fontWeight="bold">
        <text x="4" y="12" fill="#3563ad">А</text>
        <text x="2" y="29" fill="#a1332f">Я</text>
      </g>
    </svg>
  );
}

function BinocularsIcon() {
  return (
    <svg className="shrink-0" width="32" height="32" viewBox="0 0 32 32">
      <defs>
        <linearGradient id="tube">
          <stop offset="0" stopColor="#4a6aa6" />
          <stop offset=".35" stopColor="#d2dff5" />
          <stop offset="1" stopColor="#4a6aa6" />
        </linearGradient>
      </defs>
      <g fill="url(#tube)" stroke="#3f5c92" strokeWidth=".8">
        <path d="M9 3h5v3H9zM18 3h5v3h-5z" />
        <path d="M8 6h7v4H8zM17 6h7v4h-7z" />
        <path d="M5 10h10v6H4zM17 10h10l1 6H17z" />
        <path d="M2.500 16h11v12h-11zM18.500 16h11v12h-11z" />
        <path d="M13.500 13h5v7h-5z" />
      </g>
    </svg>
  );
}

function WindowsLogo() {
  return (
    <svg className="shrink-0" width="18" height="18" viewBox="0 0 18 18">
      <path d="M3 2.500c2-1.300 4-1.200 6 0L7.500 8.500c-2-1.200-4-1.200-6 0z" fill="#f0592a" />
      <path d="M10 3c2 1.200 5 1.200 7.500 0L16 9c-2.500 1.200-5 1.200-7.500 0z" fill="#8fd13f" />
      <path d="M1.200 9.500c2-1.200 4-1.200 6 0L5.700 15.500c-2-1.200-4-1.200-5.700 0z" fill="#4d8df5" />
      <path d="M8.200 10c2.500 1.200 5 1.200 7.500 0L14 16c-2.500 1.200-5 1.200-7.300 0z" fill="#fbc92f" />
    </svg>
  );
}

function FirefoxIcon() {
  return (
    <svg width="16" height="16" viewBox="0 0 16 16">
      <circle cx="8" cy="8" r="7.500" fill="#e66a12" />
      <circle cx="8.500" cy="6.500" r="4.800" fill="#3b6fc4" />
      <path d="M1 3c2 0 3 1.500 4.500 1.500L8 6 6 8c0 3 4 4 7 1 1-1 1.500-3 1-5 3 5 .5 11.500-6 11.500C2 15.500-1 9 1 3z" fill="#f5a01e" />
    </svg>
  );
}

function RedBallIcon() {
  return (
    <svg width="16" height="16" viewBox="0 0 16 16">
      <circle cx="8" cy="8" r="7.500" fill="#e9e9ee" stroke="#b7b9c4" />
      <path d="M2.500 7.500a5.500 5.500 0 0 1 11 0c-2 4-9 4-11 0z" fill="#d0262e" />
      <path d="m4 10 2.500-4L8 8l1.500-2L12 10" fill="none" stroke="#fff" strokeWidth="1.600" />
    </svg>
  );
}

function MailIcon() {
  return (
    <svg width="16" height="16" viewBox="0 0 16 16">
      <path d="M1.500 3.500h11v11h-11z" fill="#f2f8ff" stroke="#7db4ee" />
      <path d="M11 8.500A3.700 3.700 0 1 1 9.500 5.500L5 9.500" fill="none" stroke="#2a86e0" strokeWidth="1.800" />
      <path d="m9 7 5-6 2 1.500-5 6z" fill="#5fa9f0" />
      <circle cx="14" cy="4" r="1.500" fill="#f07a2c" />
    </svg>
  );
}

function FolderIcon() {
  return (
    <svg className="shrink-0" width="16" height="16" viewBox="0 0 16 16">
      <path d="M1 3h5l1.500 2H14v9H1z" fill="#e8b93c" stroke="#a87d16" strokeWidth=".7" />
      <path d="M3 7h13l-2 7H1z" fill="#fde68a" stroke="#b88c1e" strokeWidth=".7" />
    </svg>
  );
}

function DocIcon({ kind }: { kind: "word" | "excel" | "ppt" }) {
  const color = { word: "#2b5797", excel: "#2e8b3d", ppt: "#d9532c" }[kind];
  return (
    <svg className="shrink-0" width="16" height="16" viewBox="0 0 16 16" fill="none">
      <path d="M4.500.500h8l3 3v12h-11z" fill="#fff" stroke="#8ba3c7" />
      <path d="M12 5h2M12 7.500h2M12 10h2M6 13h8" stroke={color} />
      <path d="M.5 3.500h10v9H.5z" fill={kind === "word" ? "#dfe9f8" : "#fff"} stroke={color} strokeWidth="1.400" />
      {kind === "word" && <path d="M2 5.500 3.500 10.500l2-4 2 4L9 5.500" stroke={color} strokeWidth="1.400" />}
      {kind === "excel" && <path d="m2.500 5 6 6M8.500 5l-6 6" stroke={color} strokeWidth="2" />}
      {kind === "ppt" && <path d="M8 6.500A3 3 0 1 0 8.500 9H5.500V6" stroke={color} strokeWidth="1.800" />}
    </svg>
  );
}

function NetworkIcon() {
  return (
    <svg width="16" height="16" viewBox="0 0 16 16" stroke="#c4cede">
      <path d="M5.500 1.500h9v7h-9z" fill="#1e2f78" />
      <path d="M.5 5.500h8v6h-8z" fill="#2a43a0" />
      <path d="M2 13.500h6M9 10.500h5M4.500 12v2" strokeWidth="1.500" />
    </svg>
  );
}
